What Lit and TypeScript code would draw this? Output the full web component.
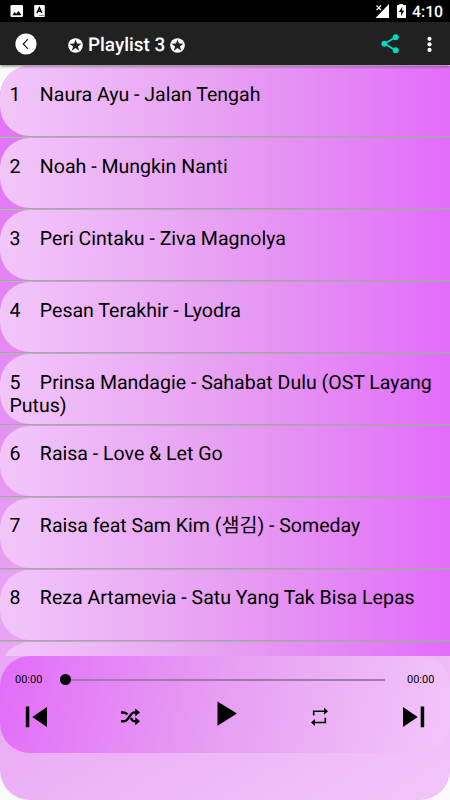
import { LitElement, html, css } from "lit";
import { customElement } from "lit/decorators.js";

const tracks = [
  "Naura Ayu - Jalan Tengah",
  "Noah - Mungkin Nanti",
  "Peri Cintaku - Ziva Magnolya",
  "Pesan Terakhir - Lyodra",
  "Prinsa Mandagie - Sahabat Dulu (OST Layang Putus)",
  "Raisa - Love & Let Go",
  "Raisa feat Sam Kim (샘김) - Someday",
  "Reza Artamevia - Satu Yang Tak Bisa Lepas",
];

const star = html`<svg class="star" width="15" height="15" viewBox="0 0 15 15">
  <circle cx="7.5" cy="7.5" r="7.3" fill="#fff" />
  <path d="M7.5 1.4 9 5.6 13.5 5.7 9.9 8.4 11.2 12.7 7.5 10.1 3.8 12.7 5.1 8.4 1.5 5.7 6 5.6Z" fill="#212121" />
</svg>`;

@customElement("app-root")
export class AppRoot extends LitElement {
  static styles = css`
    :host {
      display: flex;
      flex-direction: column;
      width: 450px;
      height: 800px;
      overflow: hidden;
      background: #fafafa;
      color: #000;
      font-family: Roboto, "Noto Sans CJK KR", sans-serif;
      text-rendering: geometricPrecision;
    }
    svg { display: block; flex: none; }
    .status {
      display: flex;
      align-items: center;
      height: 22px;
      flex: none;
      box-sizing: border-box;
      padding: 0 8px 0 10px;
      background: #000;
      color: #fff;
    }
    .clock {
      width: 30px;
      margin-left: 5px;
      padding-top: 1px;
      font-size: 15.8px;
      font-weight: 500;
      line-height: 22px;
      text-align: right;
    }
    .bar {
      display: flex;
      align-items: center;
      height: 43px;
      flex: none;
      box-sizing: border-box;
      padding-left: 15px;
      background: #212121;
      color: #fff;
      box-shadow: 0 1px 3px rgba(0, 0, 0, 0.55);
      z-index: 1;
    }
    .title {
      display: flex;
      align-items: center;
      margin-left: 31px;
      font-size: 18.9px;
      font-weight: 500;
      line-height: 24px;
    }
    .title span { width: 77px; margin: 2px 4.5px 0 5px; white-space: nowrap; }
    .star { margin-top: 3px; }
    .push { flex: 1; }
    .main {
      display: flex;
      flex-direction: column;
      flex: 1;
      min-height: 0;
      margin-top: 1px;
      border-radius: 30px;
      background: linear-gradient(148.5deg, #e26df9, #e79ff2 50%, #f2c6fa);
    }
    .list { height: 590px; flex: none; overflow: hidden; }
    .row {
      height: 69.94px;
      box-sizing: border-box;
      padding: 16.8px 9px 0 9.5px;
      border-radius: 30px 0 0 30px;
      background: linear-gradient(90deg, #f2c6fa, #e79ff2 50%, #e26df9);
      font-size: 19.55px;
      line-height: 23px;
      white-space: pre-wrap;
    }
    .line {
      height: 2px;
      background:
        linear-gradient(#a9a4ab 1px, rgba(169, 164, 171, 0.7) 1px),
        linear-gradient(90deg, #f2c6fa, #e79ff2 50%, #e26df9);
    }
    .player {
      height: 97px;
      flex: none;
      border-radius: 30px;
      background: linear-gradient(102.2deg, #e26df9, #e79ff2 50%, #f2c6fa);
    }
    .seek {
      display: flex;
      align-items: center;
      height: 46px;
      padding: 0 15px;
      font-size: 11px;
    }
    .seek span { width: 28px; }
    .track { position: relative; flex: 1; height: 2px; margin: 1px 22px 0; background: #a577b2; }
    .thumb { position: absolute; left: -5.5px; top: -4.5px; width: 11px; height: 11px; border-radius: 50%; background: #000; }
    .controls {
      display: flex;
      justify-content: space-between;
      align-items: center;
      height: 29px;
      padding: 0 25px;
    }
    .play { margin-bottom: 5px; }
  `;

  render() {
    return html`
      <div class="status">
        <svg width="36" height="14" viewBox="0 0 36 14">
          <rect x=".5" y="1" width="12.5" height="12" rx="1.2" fill="#fff" />
          <path d="M2.3 11.3 4.6 8 6.2 9.8 8.5 7 11.5 11.3Z" fill="#000" />
          <rect x="24.2" y="1" width="10.6" height="12" rx="1" fill="#fff" />
          <path d="M27 9 29.4 3.7 31.8 9M27.8 7.3H31" fill="none" stroke="#000" stroke-width="1.5" />
          <path d="M29 11.5H34" stroke="#888" />
        </svg>
        <div class="push"></div>
        <svg width="32" height="16" viewBox="375 3 32 16">
          <path d="M389 4V18H375.5Z" fill="#fff" />
          <path d="M375 4H382V11H375Z" fill="#000" />
          <path d="M376.5 5.5 381 10M381 5.5 376.5 10" stroke="#fff" stroke-width="1.1" />
          <path d="M397 5H399.3V4H403V5H406V18H397Z" fill="#fff" />
          <path d="M402.3 6.7 398.8 12H401V16L404.3 10.5H402Z" fill="#000" />
        </svg>
        <div class="clock">4:10</div>
      </div>
      <div class="bar">
        <svg width="22" height="22" viewBox="0 0 22 22">
          <circle cx="11" cy="11" r="10.6" fill="#fff" />
          <path d="M13 6.2 8.2 11 13 15.8" fill="none" stroke="#111" stroke-width="1.1" />
        </svg>
        <div class="title">${star}<span>Playlist 3</span>${star}</div>
        <div class="push"></div>
        <svg width="69" height="22" viewBox="381 33 69 22">
          <path d="M395.5 37.2 384.5 43.7 395.5 50.3" fill="none" stroke="#00d8c4" stroke-width="1.9" />
          <circle cx="395.7" cy="37.2" r="3" fill="#00d8c4" />
          <circle cx="384.4" cy="43.7" r="3" fill="#00d8c4" />
          <circle cx="395.7" cy="50.3" r="3" fill="#00d8c4" />
          <circle cx="429.5" cy="38.8" r="2.1" fill="#fff" />
          <circle cx="429.5" cy="44.3" r="2.1" fill="#fff" />
          <circle cx="429.5" cy="49.9" r="2.1" fill="#fff" />
        </svg>
      </div>
      <div class="main">
        <div class="list">
          ${tracks.map((t, i) => html`<div class="row">${i + 1 + "    " + t}</div><div class="line"></div>`)}
          <div class="row"></div>
        </div>
        <div class="player">
          <div class="seek">
            <span>00:00</span>
            <div class="track"><div class="thumb"></div></div>
            <span>00:00</span>
          </div>
          <div class="controls">
            <svg width="22" height="22" viewBox="0 0 22 22"><path d="M.8 .5H4.3V21.2H.8ZM22 1V21L7.3 11Z" /></svg>
            <svg width="20" height="18" viewBox="121 708 20 18">
              <path d="M121 712.5H123.5Q126 712.5 127.3 714.5M121 721.3H124Q126 721.3 127.5 719.3L131 714.5Q132.3 712.5 134.5 712.5H136M131 718 132 719.8Q133 721.3 135 721.3H136" fill="none" stroke="#000" stroke-width="2.4" />
              <path d="M135.3 708.5 140 712.5 135.3 716.6ZM135.3 717.3 140 721.3 135.3 725.3Z" />
            </svg>
            <svg class="play" width="22" height="26" viewBox="0 0 22 26"><path d="M2.5 .5V24.7L22 12.6Z" /></svg>
            <svg width="18" height="20" viewBox="311 707 18 20">
              <path d="M313.7 715.5V711.3H324M325.3 717.8V722.5H314.5" fill="none" stroke="#000" stroke-width="1.6" />
              <path d="M324 707.8 328 711.3 324 714.8ZM315 719 311 722.5 315 726Z" />
            </svg>
            <svg width="22" height="22" viewBox="0 0 22 22"><path d="M17.7 .5H21.2V21.2H17.7ZM0 1V21L14.7 11Z" /></svg>
          </div>
        </div>
      </div>
    `;
  }
}
